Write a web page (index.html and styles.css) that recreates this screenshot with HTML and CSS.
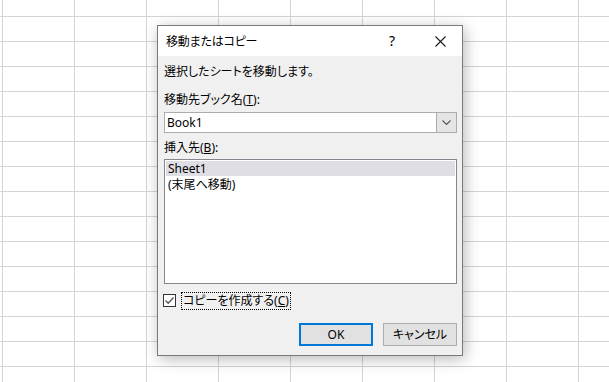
FILE: index.html
```html
<!DOCTYPE html>
<html lang="ja">
<head>
<meta charset="utf-8">
<title>移動またはコピー</title>
<link rel="stylesheet" href="styles.css">
</head>
<body>
<div class="sheet">
  <div class="dialog">
    <div class="titlebar">
      <span class="title">移動またはコピー</span>
      <span class="help">?</span>
      <span class="close"><svg width="11" height="11" viewBox="0 0 11 11"><path d="M0.5 0.5 L10.5 10.5 M10.5 0.5 L0.5 10.5" stroke="#1a1a1a" stroke-width="1.1" fill="none"/></svg></span>
    </div>
    <div class="body">
      <div class="instr">選択したシートを移動します。</div>
      <div class="label lbl1">移動先ブック名(<u>T</u>):</div>
      <div class="combo">
        <span class="combo-text">Book1</span>
        <span class="combo-btn"><svg width="9" height="5" viewBox="0 0 9 5"><path d="M0.5 0.5 L4.5 4.5 L8.5 0.5" stroke="#555" stroke-width="1.1" fill="none"/></svg></span>
      </div>
      <div class="label lbl2">挿入先(<u>B</u>):</div>
      <div class="list">
        <div class="item sel">Sheet1</div>
        <div class="item">(末尾へ移動)</div>
      </div>
      <div class="checkrow">
        <span class="check"><svg width="11" height="11" viewBox="0 0 11 11"><path d="M1.5 5.5 L4.2 8.2 L9.5 2.5" stroke="#555" stroke-width="1.3" fill="none"/></svg></span>
        <span class="checklabel">コピーを作成する(<u>C</u>)</span>
      </div>
      <div class="buttons">
        <div class="btn ok">OK</div>
        <div class="btn">キャンセル</div>
      </div>
    </div>
  </div>
</div>
</body>
</html>
```
FILE: styles.css
```css
html, body {
  margin: 0;
  padding: 0;
}
body {
  font-family: "Noto Sans", "Noto Sans CJK JP", sans-serif;
  font-size: 12px;
  color: #000;
  font-feature-settings: "palt";
}
.sheet {
  position: relative;
  width: 609px;
  height: 382px;
  background-color: #fff;
  background-image:
    linear-gradient(to right, #d4d4d4 1px, transparent 1px),
    linear-gradient(to bottom, #d4d4d4 1px, transparent 1px);
  background-size: 72px 25px;
  background-position: 2px 16px;
  overflow: hidden;
}
.dialog {
  position: absolute;
  left: 157px;
  top: 25px;
  width: 304px;
  height: 329px;
  border: 1px solid #7a7a7a;
  background: #f0f0f0;
  box-shadow: 2px 3px 14px rgba(0,0,0,0.28);
  display: flex;
  flex-direction: column;
}
.titlebar {
  height: 30px;
  background: #fff;
  display: flex;
  align-items: center;
  padding-left: 8px;
}
.title {
  flex: 1;
  font-size: 12px;
  letter-spacing: -0.2px;
}
.help {
  font-size: 14px;
  width: 14px;
  margin-right: 32px;
  margin-top: -1px;
}
.close {
  display: flex;
  margin-right: 16px;
}
.body {
  flex: 1;
  padding: 0 5px 0 6px;
  display: flex;
  flex-direction: column;
}
.instr {
  line-height: 16px;
  margin-top: 8px;
}
.label {
  line-height: 16px;
}
.lbl1 { margin-top: 12px; }
.lbl2 { margin-top: 7px; }
.combo {
  margin-top: 4px;
  height: 19px;
  border: 1px solid #acacac;
  background: #fff;
  display: flex;
}
.combo-text {
  flex: 1;
  line-height: 19px;
  padding-left: 2px;
}
.combo-btn {
  width: 19px;
  background: #e5e5e5;
  border-left: 1px solid #acacac;
  display: flex;
  align-items: center;
  justify-content: center;
}
.list {
  margin-top: 3px;
  height: 121px;
  border: 1px solid #828790;
  background: #fff;
  padding: 1px;
}
.item {
  height: 16px;
  line-height: 16px;
  padding-left: 2px;
}
.item.sel {
  background: #dedee4;
  height: 15px;
  line-height: 15px;
  margin-bottom: 1px;
}
.checkrow {
  margin-top: 8px;
  height: 18px;
  display: flex;
  align-items: center;
}
.check {
  width: 11px;
  height: 11px;
  border: 1px solid #333;
  background: #fff;
  display: flex;
  margin-left: -1px;
  margin-top: -2px;
}
.checklabel {
  margin-left: 5px;
  border: 1px dotted #000;
  height: 16px;
  line-height: 16px;
  padding: 0 1px;
}
.buttons {
  margin-top: 13px;
  display: flex;
  justify-content: flex-end;
  gap: 10px;
}
.btn {
  width: 72px;
  height: 21px;
  line-height: 21px;
  text-align: center;
  background: #e1e1e1;
  border: 1px solid #adadad;
}
.btn.ok {
  width: 70px;
  height: 19px;
  line-height: 19px;
  border: 2px solid #0078d7;
}
```
